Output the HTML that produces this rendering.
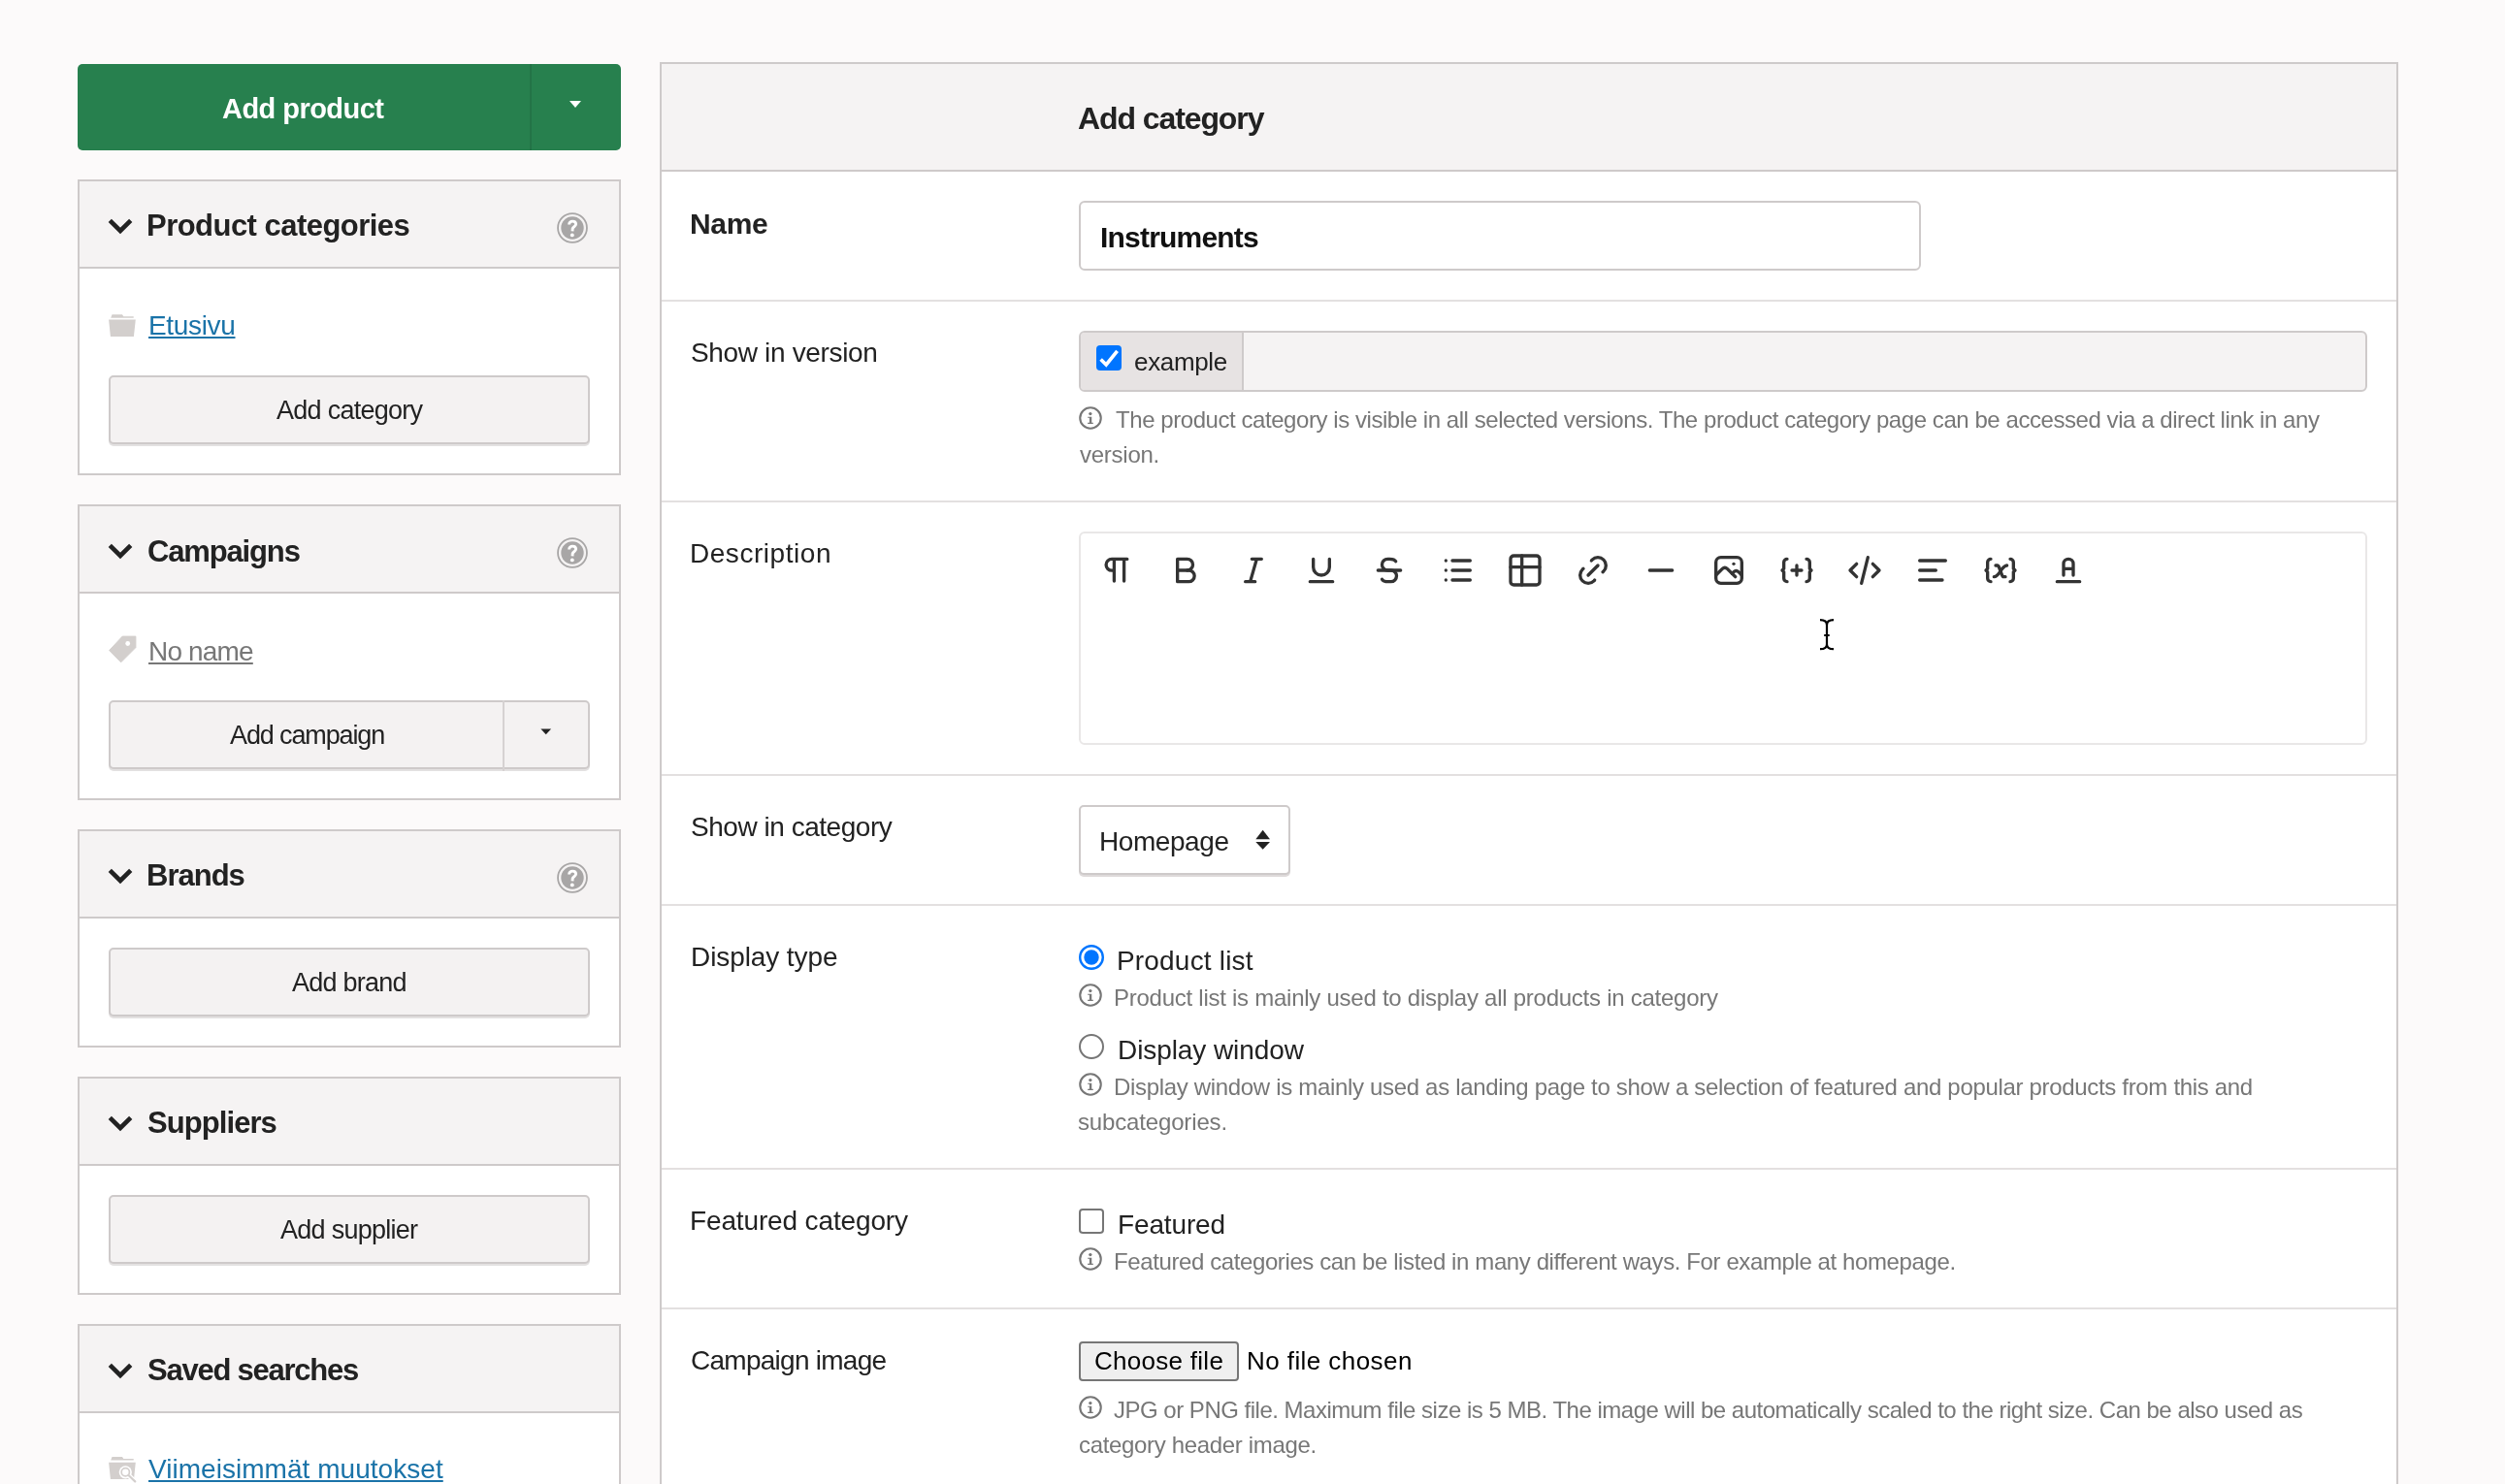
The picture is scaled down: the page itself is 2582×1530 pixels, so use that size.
<!DOCTYPE html><html><head><meta charset="utf-8"><title>Add category</title><style>

html,body{margin:0;padding:0;}
@media (max-width:1600px){html{zoom:0.5;}}
body{width:2582px;height:1530px;overflow:hidden;background:#fcfafa;position:relative;font-family:"Liberation Sans",sans-serif;}
.t{position:absolute;white-space:nowrap;will-change:transform;}
.abs{position:absolute;}
.lp{position:absolute;left:80px;width:556px;border:2px solid #cecaca;background:#fff;}
.lph{position:absolute;left:82px;width:556px;height:88px;background:#f5f3f3;border-bottom:2px solid #cecaca;}
.btn{position:absolute;left:112px;width:492px;height:67px;border:2px solid #cecaca;border-radius:5px;background:#f4f2f2;box-shadow:0 2px 0 #e3e1e1;}
.sep{position:absolute;left:682px;width:1788px;height:2px;background:#e3e0e0;}

</style></head><body>
<div class="abs" style="left:80px;top:66px;width:560px;height:89px;border-radius:5px;background:#27804e;"></div>
<div class="abs" style="left:546px;top:66px;width:2px;height:89px;background:#237347;"></div>
<svg class="abs" style="left:585px;top:102px" width="16" height="12" viewBox="0 0 16 12"><path d="M2 2H14L8 9Z" fill="#fff"/></svg>
<div class="lp" style="top:185px;height:301px"></div><div class="lph" style="top:187px"></div>
<svg class="abs" style="left:108px;top:221px" width="32" height="24" viewBox="0 0 32 24"><polyline points="5.3,6.3 16,17 26.7,6.3" fill="none" stroke="#222" stroke-width="4.6" stroke-linejoin="miter" stroke-linecap="butt"/></svg>
<svg class="abs" style="left:573px;top:218px" width="34" height="34" viewBox="-17 -17 34 34"><circle cx="0" cy="0" r="14.95" fill="none" stroke="#a8a6a6" stroke-width="1.8"/><circle cx="0" cy="0" r="11.7" fill="#a8a6a6"/><path d="M-3.4 -3.5C-3.4 -5.6 -1.8 -6.9 0.1 -6.9C2.1 -6.9 3.6 -5.7 3.6 -3.9C3.6 -1.8 1.1 -1.3 0.2 0.7L0 3.4" fill="none" stroke="#fff" stroke-width="2.9"/><circle cx="-0.2" cy="7.4" r="1.95" fill="#fff"/></svg>
<div class="lp" style="top:520px;height:301px"></div><div class="lph" style="top:522px"></div>
<svg class="abs" style="left:108px;top:556px" width="32" height="24" viewBox="0 0 32 24"><polyline points="5.3,6.3 16,17 26.7,6.3" fill="none" stroke="#222" stroke-width="4.6" stroke-linejoin="miter" stroke-linecap="butt"/></svg>
<svg class="abs" style="left:573px;top:553px" width="34" height="34" viewBox="-17 -17 34 34"><circle cx="0" cy="0" r="14.95" fill="none" stroke="#a8a6a6" stroke-width="1.8"/><circle cx="0" cy="0" r="11.7" fill="#a8a6a6"/><path d="M-3.4 -3.5C-3.4 -5.6 -1.8 -6.9 0.1 -6.9C2.1 -6.9 3.6 -5.7 3.6 -3.9C3.6 -1.8 1.1 -1.3 0.2 0.7L0 3.4" fill="none" stroke="#fff" stroke-width="2.9"/><circle cx="-0.2" cy="7.4" r="1.95" fill="#fff"/></svg>
<div class="lp" style="top:855px;height:221px"></div><div class="lph" style="top:857px"></div>
<svg class="abs" style="left:108px;top:891px" width="32" height="24" viewBox="0 0 32 24"><polyline points="5.3,6.3 16,17 26.7,6.3" fill="none" stroke="#222" stroke-width="4.6" stroke-linejoin="miter" stroke-linecap="butt"/></svg>
<svg class="abs" style="left:573px;top:888px" width="34" height="34" viewBox="-17 -17 34 34"><circle cx="0" cy="0" r="14.95" fill="none" stroke="#a8a6a6" stroke-width="1.8"/><circle cx="0" cy="0" r="11.7" fill="#a8a6a6"/><path d="M-3.4 -3.5C-3.4 -5.6 -1.8 -6.9 0.1 -6.9C2.1 -6.9 3.6 -5.7 3.6 -3.9C3.6 -1.8 1.1 -1.3 0.2 0.7L0 3.4" fill="none" stroke="#fff" stroke-width="2.9"/><circle cx="-0.2" cy="7.4" r="1.95" fill="#fff"/></svg>
<div class="lp" style="top:1110px;height:221px"></div><div class="lph" style="top:1112px"></div>
<svg class="abs" style="left:108px;top:1146px" width="32" height="24" viewBox="0 0 32 24"><polyline points="5.3,6.3 16,17 26.7,6.3" fill="none" stroke="#222" stroke-width="4.6" stroke-linejoin="miter" stroke-linecap="butt"/></svg>
<div class="lp" style="top:1365px;height:396px"></div><div class="lph" style="top:1367px"></div>
<svg class="abs" style="left:108px;top:1401px" width="32" height="24" viewBox="0 0 32 24"><polyline points="5.3,6.3 16,17 26.7,6.3" fill="none" stroke="#222" stroke-width="4.6" stroke-linejoin="miter" stroke-linecap="butt"/></svg>
<svg class="abs" style="left:110px;top:322px" width="32" height="28" viewBox="110 322 32 28"><path d="M114.2 327.7L115.5 324.2H126L127.3 326.2H137.7V327.7Z" fill="#d3cfcd"/><path d="M112.1 329.6H139.8L137.9 346.9H113.9Z" fill="#d3cfcd"/></svg>
<div class="btn" style="top:387px"></div>
<svg class="abs" style="left:110px;top:652px" width="34" height="34" viewBox="110 652 34 34"><path d="M126.2 656.1H139.9V667.6L124.7 682.8L112.7 670.5Z" fill="#d3cfcd" stroke="#d3cfcd" stroke-width="1" stroke-linejoin="round"/><circle cx="131.7" cy="663.5" r="2.4" fill="#fff"/></svg>
<div class="btn" style="top:722px"></div>
<div class="abs" style="left:518px;top:722px;width:2px;height:73px;background:#d6d2d2;"></div>
<svg class="abs" style="left:555px;top:749px" width="16" height="12" viewBox="0 0 16 12"><path d="M2.4 2.6H13.1L7.75 8.3Z" fill="#222"/></svg>
<div class="btn" style="top:977px"></div>
<div class="btn" style="top:1232px"></div>
<svg class="abs" style="left:108px;top:1498px" width="36" height="32" viewBox="108 1498 36 32"><path d="M114.2 1505.6L115.5 1502.1H126L127.3 1504.1H137.7V1505.6Z" fill="#d3cfcd"/><path d="M112.1 1507.8H139.8L138 1525H113.9Z" fill="#d3cfcd"/><circle cx="129.3" cy="1517.8" r="6.6" fill="#fff"/><path d="M133 1521.5L139.5 1528" stroke="#fff" stroke-width="5"/><circle cx="129.3" cy="1517.8" r="4.1" fill="none" stroke="#d3cfcd" stroke-width="1.7"/><path d="M132.5 1521L139.2 1527.4" stroke="#d3cfcd" stroke-width="2.2" stroke-linecap="round"/></svg>
<div class="abs" style="left:680px;top:64px;width:1788px;height:1600px;border:2px solid #cecaca;background:#fff;"></div>
<div class="abs" style="left:682px;top:66px;width:1788px;height:109px;background:#f5f3f3;border-bottom:2px solid #cecaca;"></div>
<div class="sep" style="top:309px"></div>
<div class="sep" style="top:516px"></div>
<div class="sep" style="top:798px"></div>
<div class="sep" style="top:932px"></div>
<div class="sep" style="top:1204px"></div>
<div class="sep" style="top:1348px"></div>
<div class="abs" style="left:1112px;top:207px;width:864px;height:68px;border:2px solid #cecaca;border-radius:6px;background:#fff;"></div>
<div class="abs" style="left:1112px;top:341px;width:1324px;height:59px;border:2px solid #cecaca;border-radius:6px;background:#f5f3f3;overflow:hidden;"><div style="position:absolute;left:0;top:0;width:166px;height:59px;background:#e7e3e3;border-right:2px solid #cecaca;"></div></div>
<svg class="abs" style="left:1128px;top:354px" width="30" height="30" viewBox="0 0 30 30"><rect x="2" y="2" width="26" height="26" rx="4" fill="#0075ff"/><path d="M6.6 16.4L12.2 22L23.6 7.8" fill="none" stroke="#fff" stroke-width="3.6"/></svg>
<svg class="abs" style="left:1111px;top:417.5px" width="26" height="26" viewBox="-13 -13 26 26"><circle cx="0" cy="0" r="10.75" fill="none" stroke="#777" stroke-width="2.1"/><circle cx="-0.15" cy="-4.4" r="1.65" fill="#777"/><path d="M-2.85 -1.3H1.25V4.8H2.76V6H-2.85V4.8H-1.1V-0.2H-2.85Z" fill="#777"/></svg>
<div class="abs" style="left:1112px;top:548px;width:1324px;height:216px;border:2px solid #e9e7e7;border-radius:6px;background:#fff;"></div>
<svg class="abs" style="left:1132px;top:568px" width="40" height="40" viewBox="0 0 24 24" fill="none" stroke="#333" stroke-width="2" stroke-linecap="round" stroke-linejoin="round"><path d="M9.84 5.04v13.62M15.96 5.04v13.62M17.88 5.04H8.4a3.54 3.54 0 0 0 0 7.08h1.44"/></svg>
<svg class="abs" style="left:1202px;top:568px" width="40" height="40" viewBox="0 0 24 24" fill="none" stroke="#333" stroke-width="2" stroke-linecap="round" stroke-linejoin="round"><path d="M7 5h6a3.5 3.5 0 0 1 0 7h-6z"/><path d="M13 12h1a3.5 3.5 0 0 1 0 7h-7v-7"/></svg>
<svg class="abs" style="left:1272px;top:568px" width="40" height="40" viewBox="0 0 24 24" fill="none" stroke="#333" stroke-width="2" stroke-linecap="round" stroke-linejoin="round"><path d="M11 5h6M7 19h6M14 5l-4 14"/></svg>
<svg class="abs" style="left:1342px;top:568px" width="40" height="40" viewBox="0 0 24 24" fill="none" stroke="#333" stroke-width="2" stroke-linecap="round" stroke-linejoin="round"><path d="M7 5v5a5 5 0 0 0 10 0v-5"/><path d="M5 19h14"/></svg>
<svg class="abs" style="left:1412px;top:568px" width="40" height="40" viewBox="0 0 24 24" fill="none" stroke="#333" stroke-width="2" stroke-linecap="round" stroke-linejoin="round"><path d="M5 12h14"/><path d="M16 6.5a4 2 0 0 0 -4 -1.5h-1a3.5 3.5 0 0 0 0 7h2a3.5 3.5 0 0 1 0 7h-1.5a4 2 0 0 1 -4 -1.5"/></svg>
<svg class="abs" style="left:1482px;top:568px" width="40" height="40" viewBox="0 0 24 24" fill="none" stroke="#333" stroke-width="2" stroke-linecap="round" stroke-linejoin="round"><path d="M9 6h11M9 12h11M9 18h11M5 6v.01M5 12v.01M5 18v.01"/></svg>
<svg class="abs" style="left:1552px;top:568px" width="40" height="40" viewBox="0 0 24 24" fill="none" stroke="#333" stroke-width="2" stroke-linecap="round" stroke-linejoin="round"><path d="M3 5a2 2 0 0 1 2 -2h14a2 2 0 0 1 2 2v14a2 2 0 0 1 -2 2h-14a2 2 0 0 1 -2 -2z"/><path d="M3 10h18M10 3v18"/></svg>
<svg class="abs" style="left:1622px;top:568px" width="40" height="40" viewBox="0 0 24 24" fill="none" stroke="#333" stroke-width="2" stroke-linecap="round" stroke-linejoin="round"><path d="M9 15l6 -6"/><path d="M11 6l.463 -.536a5 5 0 0 1 7.071 7.072l-.534 .464"/><path d="M13 18l-.397 .534a5.068 5.068 0 0 1 -7.127 0a4.972 4.972 0 0 1 0 -7.071l.524 -.463"/></svg>
<svg class="abs" style="left:1692px;top:568px" width="40" height="40" viewBox="0 0 24 24" fill="none" stroke="#333" stroke-width="2" stroke-linecap="round" stroke-linejoin="round"><path d="M5 12h14"/></svg>
<svg class="abs" style="left:1762px;top:568px" width="40" height="40" viewBox="0 0 24 24" fill="none" stroke="#333" stroke-width="2" stroke-linecap="round" stroke-linejoin="round"><path d="M15 8h.01"/><path d="M4 7a3 3 0 0 1 3 -3h10a3 3 0 0 1 3 3v10a3 3 0 0 1 -3 3h-10a3 3 0 0 1 -3 -3z"/><path d="M4 15l4 -4a3 5 0 0 1 3 0l5 5"/><path d="M14 14l1 -1a3 5 0 0 1 3 0l2 2"/></svg>
<svg class="abs" style="left:1832px;top:568px" width="40" height="40" viewBox="0 0 24 24" fill="none" stroke="#333" stroke-width="2" stroke-linecap="round" stroke-linejoin="round"><path d="M9 12h6M12 9v6"/><path d="M6 19a2 2 0 0 1 -2 -2v-4l-1 -1l1 -1v-4a2 2 0 0 1 2 -2"/><path d="M18 19a2 2 0 0 0 2 -2v-4l1 -1l-1 -1v-4a2 2 0 0 0 -2 -2"/></svg>
<svg class="abs" style="left:1902px;top:568px" width="40" height="40" viewBox="0 0 24 24" fill="none" stroke="#333" stroke-width="2" stroke-linecap="round" stroke-linejoin="round"><path d="M7 8l-4 4l4 4M17 8l4 4l-4 4M14 4l-4 16"/></svg>
<svg class="abs" style="left:1972px;top:568px" width="40" height="40" viewBox="0 0 24 24" fill="none" stroke="#333" stroke-width="2" stroke-linecap="round" stroke-linejoin="round"><path d="M4 6h16M4 12h10M4 18h14"/></svg>
<svg class="abs" style="left:2042px;top:568px" width="40" height="40" viewBox="0 0 24 24" fill="none" stroke="#333" stroke-width="2" stroke-linecap="round" stroke-linejoin="round"><path d="M6 19a2 2 0 0 1 -2 -2v-4l-1 -1l1 -1v-4a2 2 0 0 1 2 -2"/><path d="M18 19a2 2 0 0 0 2 -2v-4l1 -1l-1 -1v-4a2 2 0 0 0 -2 -2"/><path d="M9 9h1c1 0 1 1 2.016 3.527c.984 2.473 .984 3.473 1.984 3.473h1"/><path d="M8 16c1.5 0 3 -2 4 -3.5s2.5 -3.5 4 -3.5"/></svg>
<svg class="abs" style="left:2112px;top:568px" width="40" height="40" viewBox="0 0 24 24" fill="none" stroke="#333" stroke-width="2" stroke-linecap="round" stroke-linejoin="round"><path d="M9 15v-7a3 3 0 0 1 6 0v7M9 11h6M5 19h14"/></svg>
<svg class="abs" style="left:1870px;top:632px" width="26" height="44" viewBox="1870 632 26 44" fill="none" stroke="#000" stroke-width="2.2"><path d="M1876 639.2c4.6 0 7 1.6 7 5.2v19.8c0 3.6-2.4 5-7 5M1890 639.2c-4.6 0-7 1.6-7 5.2M1883 664.2c0 3.6 2.4 5 7 5M1880.2 655h5.5"/></svg>
<div class="abs" style="left:1112px;top:830px;width:214px;height:68px;border:2px solid #cecaca;border-radius:5px;background:#fff;box-shadow:0 2px 0 #dedada;"></div>
<svg class="abs" style="left:1290px;top:852px" width="24" height="28" viewBox="1290 852 24 28"><path d="M1294.3 865.3H1309L1301.65 855.8Z" fill="#222"/><path d="M1294.3 868H1309L1301.65 875.7Z" fill="#222"/></svg>
<svg class="abs" style="left:1110px;top:972px" width="30" height="30" viewBox="0 0 30 30"><circle cx="15" cy="15" r="11.8" fill="#fff" stroke="#0075ff" stroke-width="2.4"/><circle cx="15" cy="15" r="7.7" fill="#0075ff"/></svg>
<svg class="abs" style="left:1111px;top:1013.4000000000001px" width="26" height="26" viewBox="-13 -13 26 26"><circle cx="0" cy="0" r="10.75" fill="none" stroke="#777" stroke-width="2.1"/><circle cx="-0.15" cy="-4.4" r="1.65" fill="#777"/><path d="M-2.85 -1.3H1.25V4.8H2.76V6H-2.85V4.8H-1.1V-0.2H-2.85Z" fill="#777"/></svg>
<svg class="abs" style="left:1110px;top:1064px" width="30" height="30" viewBox="0 0 30 30"><circle cx="15" cy="15" r="12" fill="#fff" stroke="#767676" stroke-width="2"/></svg>
<svg class="abs" style="left:1111px;top:1105.2px" width="26" height="26" viewBox="-13 -13 26 26"><circle cx="0" cy="0" r="10.75" fill="none" stroke="#777" stroke-width="2.1"/><circle cx="-0.15" cy="-4.4" r="1.65" fill="#777"/><path d="M-2.85 -1.3H1.25V4.8H2.76V6H-2.85V4.8H-1.1V-0.2H-2.85Z" fill="#777"/></svg>
<div class="abs" style="left:1112px;top:1246px;width:22px;height:22px;border:2px solid #767676;border-radius:4px;background:#fff;"></div>
<svg class="abs" style="left:1111px;top:1285.3px" width="26" height="26" viewBox="-13 -13 26 26"><circle cx="0" cy="0" r="10.75" fill="none" stroke="#777" stroke-width="2.1"/><circle cx="-0.15" cy="-4.4" r="1.65" fill="#777"/><path d="M-2.85 -1.3H1.25V4.8H2.76V6H-2.85V4.8H-1.1V-0.2H-2.85Z" fill="#777"/></svg>
<div class="abs" style="left:1112px;top:1383px;width:161px;height:37px;border:2px solid #767676;border-radius:4px;background:#efefef;"></div>
<svg class="abs" style="left:1111px;top:1438.2px" width="26" height="26" viewBox="-13 -13 26 26"><circle cx="0" cy="0" r="10.75" fill="none" stroke="#777" stroke-width="2.1"/><circle cx="-0.15" cy="-4.4" r="1.65" fill="#777"/><path d="M-2.85 -1.3H1.25V4.8H2.76V6H-2.85V4.8H-1.1V-0.2H-2.85Z" fill="#777"/></svg>
<div id="t_addproduct" class="t" style="left:229.00px;top:98.01px;font-size:29px;line-height:29px;font-weight:bold;color:#fff;letter-spacing:-0.540px;">Add product</div>
<div id="t_pc" class="t" style="left:151.00px;top:217.01px;font-size:31px;line-height:31px;font-weight:bold;color:#222;letter-spacing:-0.529px;">Product categories</div>
<div id="t_etusivu" class="t" style="left:153.00px;top:321.61px;font-size:28px;line-height:28px;font-weight:normal;color:#1a73a8;letter-spacing:-0.333px;text-decoration:underline;text-decoration-thickness:2px;text-underline-offset:2px;">Etusivu</div>
<div id="t_addcat_btn" class="t" style="left:284.50px;top:410.00px;font-size:27px;line-height:27px;font-weight:normal;color:#222;letter-spacing:-0.727px;">Add category</div>
<div id="t_campaigns" class="t" style="left:152.00px;top:552.51px;font-size:31px;line-height:31px;font-weight:bold;color:#222;letter-spacing:-1.150px;">Campaigns</div>
<div id="t_noname" class="t" style="left:153.00px;top:657.81px;font-size:28px;line-height:28px;font-weight:normal;color:#777;letter-spacing:-0.833px;text-decoration:underline;text-decoration-thickness:2px;text-underline-offset:2px;">No name</div>
<div id="t_addcampaign" class="t" style="left:237.00px;top:745.00px;font-size:27px;line-height:27px;font-weight:normal;color:#222;letter-spacing:-1.127px;">Add campaign</div>
<div id="t_brands" class="t" style="left:151.00px;top:887.01px;font-size:31px;line-height:31px;font-weight:bold;color:#222;letter-spacing:-1.000px;">Brands</div>
<div id="t_addbrand" class="t" style="left:301.00px;top:1000.00px;font-size:27px;line-height:27px;font-weight:normal;color:#222;letter-spacing:-0.775px;">Add brand</div>
<div id="t_suppliers" class="t" style="left:151.50px;top:1142.01px;font-size:31px;line-height:31px;font-weight:bold;color:#222;letter-spacing:-0.925px;">Suppliers</div>
<div id="t_addsupplier" class="t" style="left:288.50px;top:1255.00px;font-size:27px;line-height:27px;font-weight:normal;color:#222;letter-spacing:-0.727px;">Add supplier</div>
<div id="t_saved" class="t" style="left:151.50px;top:1397.01px;font-size:31px;line-height:31px;font-weight:bold;color:#222;letter-spacing:-1.246px;">Saved searches</div>
<div id="t_viim" class="t" style="left:152.50px;top:1501.00px;font-size:28px;line-height:28px;font-weight:normal;color:#1a73a8;letter-spacing:0.038px;text-decoration:underline;text-decoration-thickness:2px;text-underline-offset:2px;">Viimeisimmät muutokset</div>
<div id="t_title" class="t" style="left:1111.00px;top:106.01px;font-size:32px;line-height:32px;font-weight:bold;color:#222;letter-spacing:-1.091px;">Add category</div>
<div id="t_name" class="t" style="left:711.00px;top:216.01px;font-size:30px;line-height:30px;font-weight:bold;color:#222;letter-spacing:-0.333px;">Name</div>
<div id="t_instr" class="t" style="left:1134.00px;top:230.01px;font-size:30px;line-height:30px;font-weight:bold;color:#111;letter-spacing:-0.800px;">Instruments</div>
<div id="t_siv" class="t" style="left:711.50px;top:350.00px;font-size:28px;line-height:28px;font-weight:normal;color:#222;letter-spacing:-0.343px;">Show in version</div>
<div id="t_example" class="t" style="left:1169.00px;top:360.01px;font-size:26px;line-height:26px;font-weight:normal;color:#222;letter-spacing:-0.333px;">example</div>
<div id="t_info1" class="t" style="left:1150.00px;top:421.01px;font-size:24px;line-height:24px;font-weight:normal;color:#777;letter-spacing:-0.439px;">The product category is visible in all selected versions. The product category page can be accessed via a direct link in any</div>
<div id="t_info1b" class="t" style="left:1113.00px;top:456.61px;font-size:24px;line-height:24px;font-weight:normal;color:#777;letter-spacing:-0.257px;">version.</div>
<div id="t_desc" class="t" style="left:711.00px;top:557.00px;font-size:28px;line-height:28px;font-weight:normal;color:#222;letter-spacing:0.540px;">Description</div>
<div id="t_sic" class="t" style="left:712.00px;top:839.00px;font-size:28px;line-height:28px;font-weight:normal;color:#222;letter-spacing:-0.467px;">Show in category</div>
<div id="t_homepage" class="t" style="left:1133.00px;top:853.61px;font-size:28px;line-height:28px;font-weight:normal;color:#222;letter-spacing:-0.429px;">Homepage</div>
<div id="t_dt" class="t" style="left:711.50px;top:973.00px;font-size:28px;line-height:28px;font-weight:normal;color:#222;letter-spacing:-0.091px;">Display type</div>
<div id="t_pl" class="t" style="left:1151.00px;top:977.00px;font-size:28px;line-height:28px;font-weight:normal;color:#222;letter-spacing:0.182px;">Product list</div>
<div id="t_info2" class="t" style="left:1148.00px;top:1017.01px;font-size:24px;line-height:24px;font-weight:normal;color:#777;letter-spacing:-0.258px;">Product list is mainly used to display all products in category</div>
<div id="t_dw" class="t" style="left:1151.50px;top:1068.70px;font-size:28px;line-height:28px;font-weight:normal;color:#222;letter-spacing:-0.077px;">Display window</div>
<div id="t_info3" class="t" style="left:1148.00px;top:1108.81px;font-size:24px;line-height:24px;font-weight:normal;color:#777;letter-spacing:-0.323px;">Display window is mainly used as landing page to show a selection of featured and popular products from this and</div>
<div id="t_info3b" class="t" style="left:1111.00px;top:1145.01px;font-size:24px;line-height:24px;font-weight:normal;color:#777;letter-spacing:-0.154px;">subcategories.</div>
<div id="t_fc" class="t" style="left:711.00px;top:1244.70px;font-size:28px;line-height:28px;font-weight:normal;color:#222;letter-spacing:-0.137px;">Featured category</div>
<div id="t_featured" class="t" style="left:1151.50px;top:1249.00px;font-size:28px;line-height:28px;font-weight:normal;color:#222;letter-spacing:-0.143px;">Featured</div>
<div id="t_info4" class="t" style="left:1148.00px;top:1288.61px;font-size:24px;line-height:24px;font-weight:normal;color:#777;letter-spacing:-0.395px;">Featured categories can be listed in many different ways. For example at homepage.</div>
<div id="t_ci" class="t" style="left:712.00px;top:1388.70px;font-size:28px;line-height:28px;font-weight:normal;color:#222;letter-spacing:-0.738px;">Campaign image</div>
<div id="t_choose" class="t" style="left:1128.00px;top:1390.01px;font-size:26px;line-height:26px;font-weight:normal;color:#000;letter-spacing:0.280px;">Choose file</div>
<div id="t_nofile" class="t" style="left:1284.50px;top:1390.01px;font-size:26px;line-height:26px;font-weight:normal;color:#000;letter-spacing:0.431px;">No file chosen</div>
<div id="t_info5" class="t" style="left:1147.50px;top:1441.61px;font-size:24px;line-height:24px;font-weight:normal;color:#777;letter-spacing:-0.498px;">JPG or PNG file. Maximum file size is 5 MB. The image will be automatically scaled to the right size. Can be also used as</div>
<div id="t_info5b" class="t" style="left:1112.00px;top:1477.81px;font-size:24px;line-height:24px;font-weight:normal;color:#777;letter-spacing:-0.333px;">category header image.</div>
</body></html>
